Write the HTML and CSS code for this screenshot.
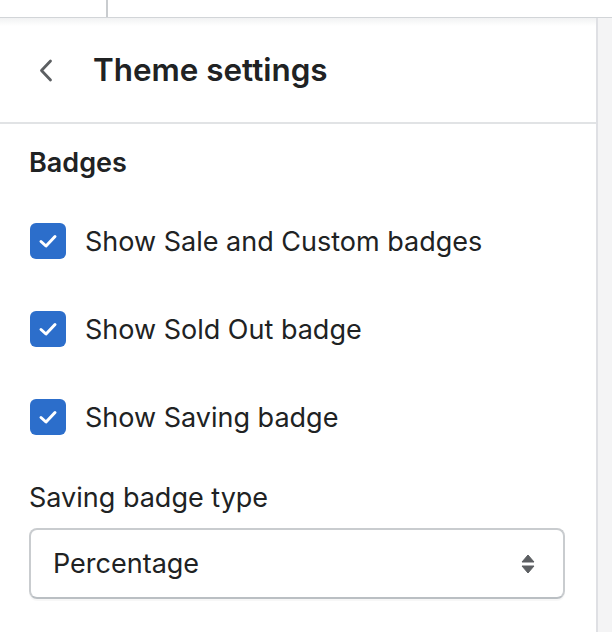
FILE: index.html
```html
<!DOCTYPE html>
<html>
<head>
<meta charset="utf-8">
<link rel="stylesheet" href="styles.css">
</head>
<body>
<div class="topbar">
  <div class="topbar-left"></div>
  <div class="topbar-rest"></div>
</div>
<div class="main">
  <div class="panel">
    <div class="header">
      <span class="back">
        <svg width="14" height="23" viewBox="0 0 14 23"><path d="M11.5 2 L2.5 11.5 L11.5 21" fill="none" stroke="#5c5f62" stroke-width="2.8" stroke-linecap="round" stroke-linejoin="round"/></svg>
      </span>
      <h1 class="title">Theme settings</h1>
    </div>
    <div class="content">
      <h2 class="section">Badges</h2>
      <label class="check-row"><span class="box"><svg width="20" height="16" viewBox="0 0 20 16"><path d="M3 8.5 L8 13 L17 3.5" fill="none" stroke="#fff" stroke-width="3" stroke-linecap="round" stroke-linejoin="round"/></svg></span><span class="check-label">Show Sale and Custom badges</span></label>
      <label class="check-row"><span class="box"><svg width="20" height="16" viewBox="0 0 20 16"><path d="M3 8.5 L8 13 L17 3.5" fill="none" stroke="#fff" stroke-width="3" stroke-linecap="round" stroke-linejoin="round"/></svg></span><span class="check-label">Show Sold Out badge</span></label>
      <label class="check-row"><span class="box"><svg width="20" height="16" viewBox="0 0 20 16"><path d="M3 8.5 L8 13 L17 3.5" fill="none" stroke="#fff" stroke-width="3" stroke-linecap="round" stroke-linejoin="round"/></svg></span><span class="check-label">Show Saving badge</span></label>
      <div class="field-label">Saving badge type</div>
      <div class="select">
        <span class="select-value">Percentage</span>
        <svg class="arrows" width="14" height="20" viewBox="0 0 14 20"><path d="M7 1 L13 8 L1 8 Z M1 12 L13 12 L7 19 Z" fill="#5c5f62" stroke="#5c5f62" stroke-width="1" stroke-linejoin="round"/></svg>
      </div>
    </div>
  </div>
  <div class="strip"></div>
</div>
</body>
</html>
```
FILE: styles.css
```css
* { box-sizing: border-box; }
html, body { margin: 0; padding: 0; }
body {
  width: 612px;
  height: 632px;
  overflow: hidden;
  background: #fff;
  font-family: Inter, "Noto Sans", sans-serif;
  color: #202223;
}
.topbar {
  display: flex;
  height: 18px;
  border-bottom: 1px solid #d2d5d8;
  background: #fff;
}
.topbar-left {
  width: 108px;
  border-right: 2px solid #c9cccf;
}
.topbar-rest { flex: 1; }
.main {
  display: flex;
  height: 614px;
  background: linear-gradient(#f1f2f3, #fff 8px);
}
.panel { flex: 1; }
.strip {
  width: 16px;
  background: #f4f4f5;
  border-left: 2px solid #dfe0e4;
}
.header {
  display: flex;
  align-items: center;
  height: 106px;
  border-bottom: 2px solid #e1e3e5;
  padding-left: 39px;
}
.back { display: flex; width: 54px; }
.title {
  margin: 0;
  font-size: 31.4px;
  font-weight: 600;
  color: #202223;
}
.content { padding: 23px 0 0 29px; }
.section {
  margin: 0 0 44px;
  font-size: 27px;
  font-weight: 600;
  line-height: 32px;
}
.check-row {
  display: flex;
  align-items: center;
  height: 36px;
  margin-bottom: 52px;
}
.box {
  width: 36px;
  height: 36px;
  border-radius: 6px;
  background: #2c6ecb;
  display: flex;
  align-items: center;
  justify-content: center;
  margin-left: 1px;
  margin-right: 19px;
}
.check-label { font-size: 27px; }
.field-label {
  margin-top: -5px;
  font-size: 27px;
  line-height: 32px;
}
.select {
  margin-top: 14px;
  width: 536px;
  height: 71px;
  border: 2px solid #c9cccf;
  border-bottom-color: #babfc3;
  border-radius: 8px;
  display: flex;
  align-items: center;
  justify-content: space-between;
  padding: 0 28px 0 22px;
  box-shadow: 0 2px 0 rgba(0,0,0,0.03);
}
.select-value { font-size: 27px; }
```
